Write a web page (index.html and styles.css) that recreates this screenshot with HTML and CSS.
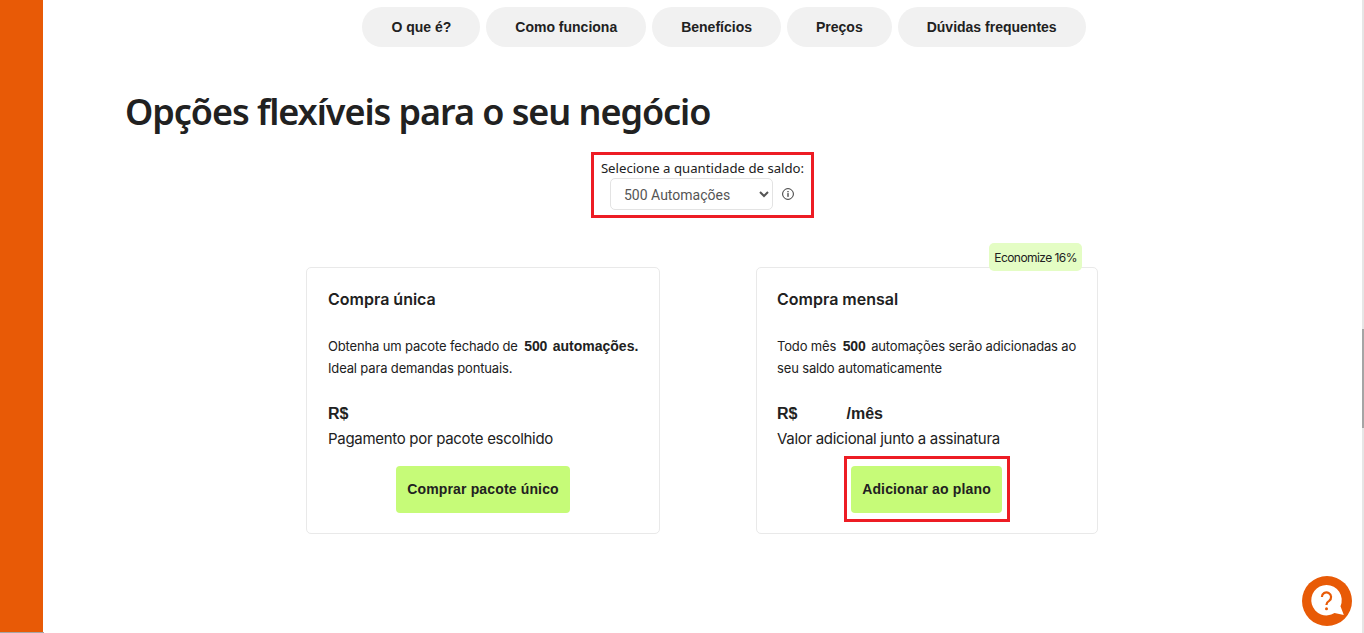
FILE: index.html
```html
<!DOCTYPE html>
<html lang="pt-BR">
<head>
<meta charset="utf-8">
<title>Opções flexíveis para o seu negócio</title>
<link rel="stylesheet" href="styles.css">
</head>
<body>
<div class="page">
  <aside class="side"></aside>
  <main class="main">
    <nav class="nav">
      <a class="pill">O que é?</a>
      <a class="pill">Como funciona</a>
      <a class="pill">Benefícios</a>
      <a class="pill">Preços</a>
      <a class="pill">Dúvidas frequentes</a>
    </nav>
    <h1 class="title">Opções flexíveis para o seu negócio</h1>
    <div class="selector-row">
      <div class="selector mark">
        <label class="selector-label" for="qty">Selecione a quantidade de saldo:</label>
        <div class="selector-field">
          <select class="select" id="qty"><option>500 Automações</option></select>
          <svg class="info" viewBox="0 0 16 16" width="12" height="12" aria-hidden="true"><circle cx="8" cy="8" r="7.2" fill="none" stroke="#333" stroke-width="1.3"/><rect x="7.2" y="6.8" width="1.6" height="5" fill="#333"/><rect x="7.2" y="4" width="1.6" height="1.7" fill="#333"/></svg>
        </div>
      </div>
    </div>
    <div class="cards">
      <section class="card card-one">
        <h2 class="card-title">Compra única</h2>
        <p class="card-text"><span class="line">Obtenha um pacote fechado de <b class="num">500</b> <b class="strong">automações.</b></span><br>Ideal para demandas pontuais.</p>
        <p class="price">R$</p>
        <p class="note">Pagamento por pacote escolhido</p>
        <div class="action"><button class="buy">Comprar pacote único</button></div>
      </section>
      <section class="card card-two">
        <span class="badge">Economize 16%</span>
        <h2 class="card-title">Compra mensal</h2>
        <p class="card-text">Todo mês <b class="num">500</b> automações serão adicionadas ao seu saldo automaticamente</p>
        <p class="price">R$<span class="hidden-value"></span>/mês</p>
        <p class="note">Valor adicional junto a assinatura</p>
        <div class="action"><div class="mark mark-button"><button class="buy">Adicionar ao plano</button></div></div>
      </section>
    </div>
  </main>
</div>
<button class="help" aria-label="Ajuda">
  <svg viewBox="0 0 50 50" width="50" height="50" aria-hidden="true">
    <circle cx="25" cy="25" r="25" fill="#e85a06"/>
    <path d="M24.500 9a15.200 15.200 0 1 0 8 28.100l9.300 1.900-3.300-8.800A15.200 15.200 0 0 0 24.500 9z" fill="#fff"/>
    <path d="M19.900 21a4.600 4.600 0 1 1 7.200 3.800c-1.700 1.100-2.600 2-2.600 3.700v.4" fill="none" stroke="#e85a06" stroke-width="2.200"/>
    <circle cx="24.500" cy="32.700" r="1.500" fill="#e85a06"/>
  </svg>
</button>
<div class="scroll-track"><div class="scroll-thumb"></div></div>
<div class="bottom-rule"></div>
</body>
</html>
```
FILE: styles.css
```css
* { box-sizing: border-box; }
html, body { margin: 0; height: 100%; overflow: hidden; background: #fff; }
body { font-family: Inter, "Liberation Sans", sans-serif; color: #212121; }
.page { display: flex; height: 633px; }
.side { width: 43px; flex: none; background: #e85a06; }
.main { flex: 1; min-width: 0; padding-top: 7px; }
.nav { display: flex; justify-content: center; gap: 6px; padding-left: 41px; }
.pill { height: 40px; padding: 0 29px; border-radius: 20px; background: #f1f1f1; display: flex; align-items: center;
  font: 700 14px "Liberation Sans", sans-serif; color: #212121; white-space: nowrap; }
.title { margin: 41px 0 0 82px; font: 600 36px/48px "Noto Sans", sans-serif; color: #212121; letter-spacing: -1.06px; }
.selector-row { display: flex; justify-content: center; margin-top: 16px; padding-right: 2px; }
.mark { border: 3px solid #ed1c24; }
.selector { width: 223px; height: 66px; display: flex; flex-direction: column; align-items: center; padding-top: 4px; }
.selector-label { font: 400 13.2px/18px "Noto Sans", "Open Sans", sans-serif; color: #212121; white-space: nowrap; }
.selector-field { display: flex; align-items: center; gap: 9px; margin-top: 1px; margin-left: -1px; }
.select { width: 163px; height: 32px; padding: 2px 9px 0; border: 1px solid #e3e3e3; border-radius: 5px; background: #fff;
  font: 400 14px Roboto, sans-serif; color: #555; }
.info { flex: none; }
.cards { display: flex; align-items: flex-start; gap: 96px; margin: 49px 0 0 263px; }
.card { position: relative; height: 267px; padding: 20px 16px 0 20px; border: 1px solid #e9e9e9; border-radius: 5px; background: #fff; }
.card-one { width: 354px; padding: 20px 21px 0; }
.card-two { width: 342px; }
.card-title { margin: 0; font: 600 16px/22px Inter, sans-serif; color: #212121; }
.card-text { margin: 26px 0 0; font: 400 13px/21.5px Inter, sans-serif; color: #212121; letter-spacing: -0.15px; }
.line { white-space: nowrap; }
.num { font: 700 14px "Liberation Sans", sans-serif; margin: 0 2px 0 3px; }
.strong { font: 700 14px "Liberation Sans", sans-serif; letter-spacing: 0; }
.price { margin: 24px 0 0; font: 700 16px/22px "Liberation Sans", sans-serif; display: flex; }
.hidden-value { width: 49px; }
.note { margin: 2px 0 0; font: 400 15px/24px Inter, sans-serif; letter-spacing: -0.3px; }
.action { display: flex; justify-content: center; margin-top: 15px; }
.card-two .action { margin-right: 4px; }
.buy { height: 47px; padding: 0 11.5px 2px; border: 0; border-radius: 4px; background: #c6fb78; color: #212121;
  font: 700 14px "Liberation Sans", sans-serif; letter-spacing: 0.15px; white-space: nowrap; }
.mark-button { margin-top: -10px; padding: 7px 5px 6px 4px; }
.mark-button .buy { display: block; }
.badge { position: absolute; top: -25px; right: 15px; height: 28px; padding: 0 5px; display: flex; align-items: center; border-radius: 5px;
  background: #e4fdc4; font: 400 12px Inter, sans-serif; letter-spacing: -0.55px; color: #212121; }
.help { position: fixed; left: 1302px; bottom: 7px; width: 50px; height: 50px; padding: 0; border: 0; background: none; display: block; }
.help svg { display: block; }
.scroll-track { position: fixed; right: 0; top: 0; width: 2px; height: 633px; background: #e6e6e6; }
.scroll-thumb { position: absolute; top: 329px; left: 0; width: 2px; height: 99px; background: #a5a5a5; }
.bottom-rule { position: fixed; left: 0; bottom: 0; width: 44px; height: 1px; background: #a5a5a5; }
```
